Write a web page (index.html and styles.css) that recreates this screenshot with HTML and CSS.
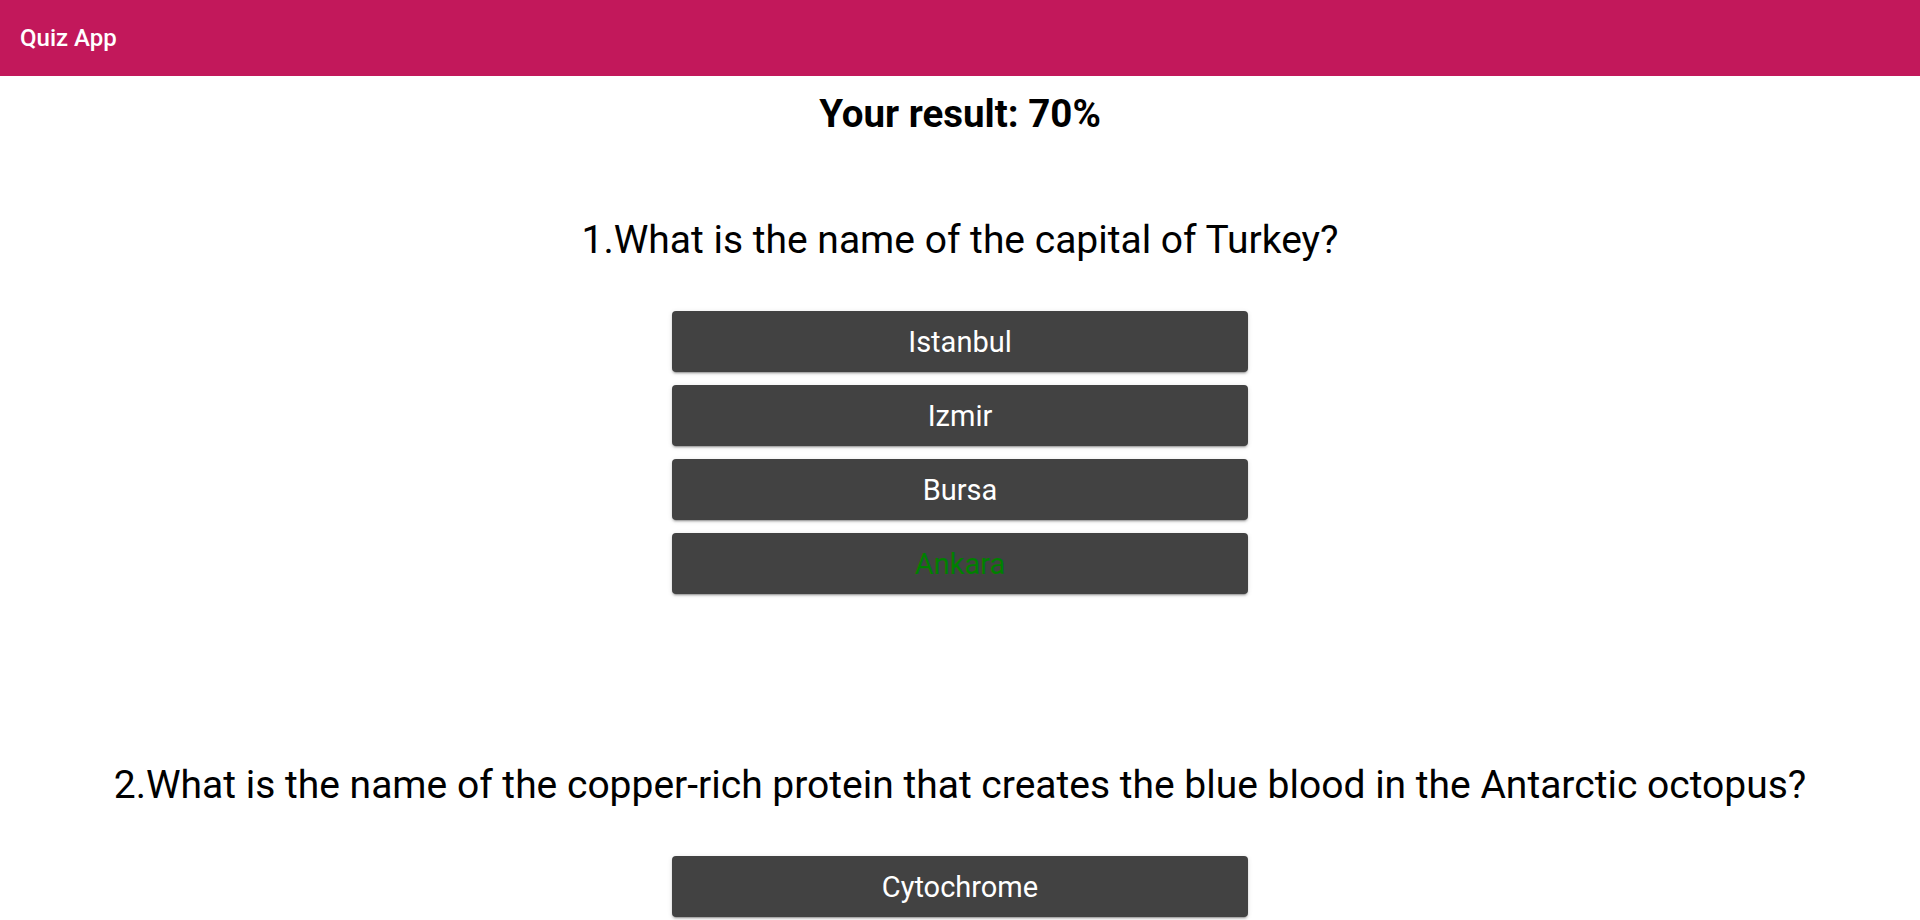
FILE: index.html
```html
<!DOCTYPE html>
<html lang="en">
<head>
<meta charset="utf-8">
<title>Quiz App</title>
<link rel="stylesheet" href="styles.css">
</head>
<body>
<header class="app-bar">
  <span class="app-title">Quiz App</span>
</header>
<main class="content">
  <h1 class="result">Your result: 70%</h1>
  <section class="quiz-block">
    <h2 class="question">1.What is the name of the capital of Turkey?</h2>
    <div class="answers">
      <button class="answer">Istanbul</button>
      <button class="answer">Izmir</button>
      <button class="answer">Bursa</button>
      <button class="answer correct">Ankara</button>
    </div>
  </section>
  <section class="quiz-block">
    <h2 class="question">2.What is the name of the copper-rich protein that creates the blue blood in the Antarctic octopus?</h2>
    <div class="answers">
      <button class="answer">Cytochrome</button>
    </div>
  </section>
</main>
</body>
</html>
```
FILE: styles.css
```css
* { box-sizing: border-box; }
html, body { margin: 0; padding: 0; }
body {
  font-family: Roboto, "Liberation Sans", sans-serif;
  background: #ffffff;
  color: #000000;
  overflow: hidden;
  height: 920px;
}
.app-bar {
  height: 76px;
  background: #c2185b;
  display: flex;
  align-items: center;
  padding-left: 20px;
}
.app-title {
  color: #ffffff;
  font-size: 24px;
  font-weight: 500;
}
.content {
  display: flex;
  flex-direction: column;
  align-items: center;
}
.result {
  margin: 18px 0 0;
  font-size: 38.5px;
  line-height: 40px;
  font-weight: 700;
}
.quiz-block {
  width: 100%;
  padding: 82px 0 85px;
  display: flex;
  flex-direction: column;
  align-items: center;
}
.question {
  margin: 0 0 47px;
  font-size: 39px;
  line-height: 48px;
  font-weight: 400;
  text-align: center;
}
.answers {
  display: flex;
  flex-direction: column;
  gap: 13px;
  width: 576px;
}
.answer {
  height: 61px;
  border: none;
  border-radius: 4px;
  background: #424242;
  color: #ffffff;
  font-family: Roboto, "Liberation Sans", sans-serif;
  font-size: 29px;
  box-shadow: 0 2px 2px rgba(0,0,0,0.14), 0 1px 5px rgba(0,0,0,0.12), 0 3px 1px -2px rgba(0,0,0,0.2);
}
.answer.correct { color: #008000; }
```
